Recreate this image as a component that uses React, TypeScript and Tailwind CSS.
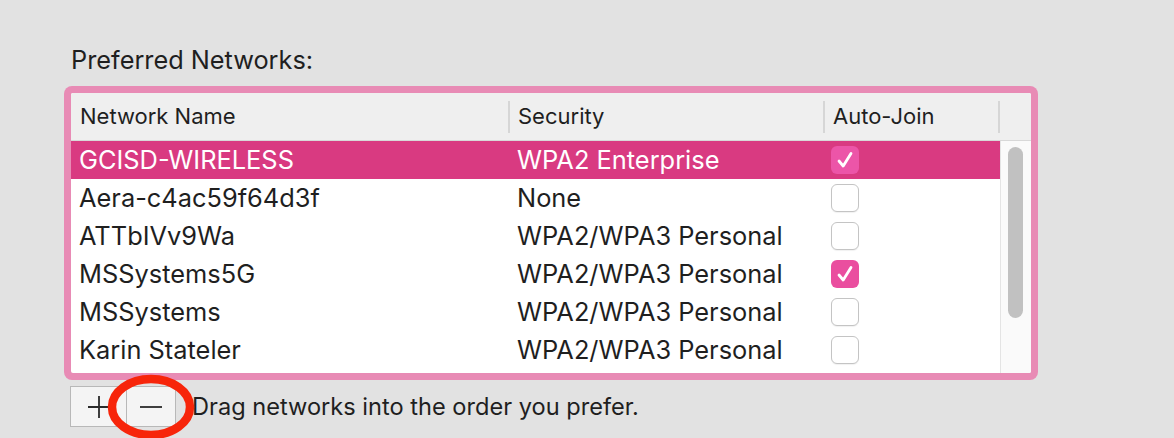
import React from 'react'

const networks = [
  { name: 'GCISD-WIRELESS', security: 'WPA2 Enterprise', auto: true, selected: true },
  { name: 'Aera-c4ac59f64d3f', security: 'None', auto: false },
  { name: 'ATTbIVv9Wa', security: 'WPA2/WPA3 Personal', auto: false },
  { name: 'MSSystems5G', security: 'WPA2/WPA3 Personal', auto: true },
  { name: 'MSSystems', security: 'WPA2/WPA3 Personal', auto: false },
  { name: 'Karin Stateler', security: 'WPA2/WPA3 Personal', auto: false },
]

function Checkbox({ checked, onSelected }: { checked: boolean; onSelected?: boolean }) {
  if (checked) {
    return (
      <div
        className={`w-[28px] h-[28px] rounded-[6px] flex items-center justify-center ${
          onSelected ? 'bg-[#ec55a8]' : 'bg-[#ea4e9f]'
        }`}
      >
        <svg width="20" height="20" viewBox="0 0 20 20" fill="none">
          <path d="M4 11 L8.2 16 L16 3.5" stroke="white" strokeWidth="2.8" strokeLinecap="round" strokeLinejoin="round" />
        </svg>
      </div>
    )
  }
  return <div className="w-[28px] h-[28px] rounded-[6px] bg-white border border-[#c4c4c4] shadow-[0_1px_1px_rgba(0,0,0,0.06)]" />
}

export default function App() {
  return (
    <div
      className="relative w-[1174px] h-[438px] overflow-hidden bg-[#e2e2e2] pl-[64px] pt-[44px] text-[#1f1f1f]"
      style={{ fontFamily: 'Inter, "Liberation Sans", sans-serif' }}
    >
      {/* title */}
      <div className="ml-[7px] h-[32px] leading-[32px] text-[25.3px]">Preferred Networks:</div>

      {/* pink focus frame */}
      <div className="mt-[10px] w-[974px] h-[294px] rounded-[8px] bg-[#e88bb5] p-[7px]">
        <div className="h-[280px] bg-white rounded-[2px] overflow-hidden flex flex-col">
          {/* header */}
          <div className="h-[48px] shrink-0 bg-[#efefef] border-b border-[#d8d8d8] flex items-center text-[22px]">
            <div className="w-[437px] pl-[9px]">Network Name</div>
            <div className="w-[315px] flex items-center">
              <div className="w-[2px] h-[32px] bg-[#d6d6d6]" />
              <div className="pl-[8px]">Security</div>
            </div>
            <div className="w-[175px] flex items-center">
              <div className="w-[2px] h-[32px] bg-[#d6d6d6]" />
              <div className="pl-[8px]">Auto-Join</div>
            </div>
            <div className="flex-1 flex items-center">
              <div className="w-[2px] h-[32px] bg-[#d6d6d6]" />
            </div>
          </div>

          {/* body */}
          <div className="flex flex-1 min-h-0">
            <div className="w-[929px]">
              {networks.map((n) => (
                <div
                  key={n.name}
                  className={`h-[38px] flex items-center text-[25.4px] ${
                    n.selected ? 'bg-[#d93a81] text-white' : ''
                  }`}
                >
                  <div className="w-[438px] pl-[8px]">{n.name}</div>
                  <div className="w-[314px] pl-[8px]">{n.security}</div>
                  <div className="pl-[8px]">
                    <Checkbox checked={n.auto} onSelected={n.selected} />
                  </div>
                </div>
              ))}
            </div>
            {/* scroll track */}
            <div className="flex-1 bg-[#fafafa] border-l border-[#e4e4e4] pl-[7px] pt-[6px]">
              <div className="w-[15px] h-[171px] rounded-full bg-[#c1c1c1]" />
            </div>
          </div>
        </div>
      </div>

      {/* add / remove buttons */}
      <div className="mt-[6px] ml-[6px] flex items-center">
        <div className="flex h-[41px] border border-[#b8b8b8] bg-[#f4f4f4]">
          <div className="w-[56px] flex items-center justify-center border-r border-[#b8b8b8]">
            <svg width="26" height="26" viewBox="0 0 26 26">
              <path d="M13 2 V24 M2 13 H24" stroke="#2a2a2a" strokeWidth="1.8" />
            </svg>
          </div>
          <div className="w-[48px] flex items-center justify-center">
            <svg width="26" height="26" viewBox="0 0 26 26">
              <path d="M2 13 H24" stroke="#2a2a2a" strokeWidth="1.8" />
            </svg>
          </div>
        </div>
        <div className="ml-[16px] text-[23.6px]">Drag networks into the order you prefer.</div>
      </div>

      {/* red annotation circle */}
      <svg className="absolute left-[106px] top-[374px]" width="90" height="68" viewBox="0 0 90 68" fill="none">
        <ellipse cx="45" cy="33" rx="39" ry="28" stroke="#f7250a" strokeWidth="8.5" />
      </svg>
    </div>
  )
}
